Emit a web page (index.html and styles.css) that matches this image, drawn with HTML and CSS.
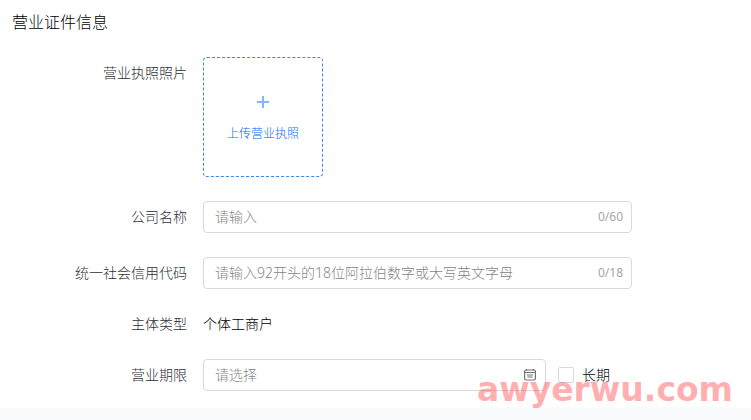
FILE: index.html
```html
<!DOCTYPE html>
<html lang="zh-CN">
<head>
    <meta charset="UTF-8">
    <meta name="viewport" content="width=device-width, initial-scale=1.0">
    <title>营业证件信息</title>
    <link rel="stylesheet" href="styles.css">
</head>
<body>
    <form class="panel">
        <h2 class="title">营业证件信息</h2>

        <div class="row">
            <span class="label" id="licenseLabel">营业执照照片</span>
            <button type="button" class="upload" aria-describedby="licenseLabel">
                <svg class="plus" viewBox="0 0 12 12" aria-hidden="true">
                    <path d="M0 6h12M6 0v12"/>
                </svg>
                <span>上传营业执照</span>
            </button>
        </div>

        <div class="row">
            <label class="label" for="company">公司名称</label>
            <div class="field">
                <input type="text" id="company" placeholder="请输入" maxlength="60">
                <span class="count">0/60</span>
            </div>
        </div>

        <div class="row">
            <label class="label" for="creditCode">统一社会信用代码</label>
            <div class="field">
                <input type="text" id="creditCode" placeholder="请输入92开头的18位阿拉伯数字或大写英文字母" maxlength="18">
                <span class="count">0/18</span>
            </div>
        </div>

        <div class="row row-text">
            <span class="label">主体类型</span>
            <span class="value">个体工商户</span>
        </div>

        <div class="row">
            <label class="label" for="term">营业期限</label>
            <div class="term">
                <div class="field">
                    <input type="text" id="term" placeholder="请选择">
                    <svg class="calendar" viewBox="0 0 12 12" aria-hidden="true">
                        <rect x="0.6" y="1" width="10.8" height="10" rx="1.5"/>
                        <path d="M1 3.5h10M2.5 0v1.5M9.5 0v1.5M3 6h6M3.5 8h5"/>
                    </svg>
                </div>
                <label class="check">
                    <input type="checkbox">
                    <span>长期</span>
                </label>
            </div>
        </div>
    </form>
    <div class="watermark">awyerwu.com</div>
</body>
</html>
```

FILE: styles.css
```css
* {
    box-sizing: border-box;
}
body {
    margin: 0;
    min-height: 100vh;
    position: relative;
    background-color: #fafbfd;
    font-family: "Noto Sans", "Noto Sans CJK SC", sans-serif;
    font-size: 14px;
    font-weight: 300;
    color: #000;
}
.panel {
    padding: 10px 12px 16px;
    background-color: #fff;
}
.title {
    margin: 0 0 23px;
    font-size: 16px;
    font-weight: 300;
    line-height: 24px;
}
.row {
    display: flex;
    gap: 16px;
    margin-bottom: 24px;
    line-height: 32px;
}
.row:last-child {
    margin-bottom: 0;
}
.row-text {
    line-height: 22px;
}
.label {
    flex: 0 0 175px;
    text-align: right;
    color: #2c2f36;
}
.upload {
    display: flex;
    flex-direction: column;
    align-items: center;
    justify-content: center;
    gap: 18px;
    width: 120px;
    height: 120px;
    padding: 4px 0 0;
    border: 1px dashed #3386f5;
    border-radius: 4px;
    background-color: #fff;
    color: #0a66f5;
    font: inherit;
    font-size: 12px;
    line-height: 16px;
    cursor: pointer;
}
.plus {
    width: 12px;
    height: 12px;
    fill: none;
    stroke: #85b6fc;
    stroke-width: 2;
}
.field {
    display: flex;
    align-items: center;
    flex: 1;
    max-width: 429px;
    height: 32px;
    padding: 0 8px 0 11px;
    border: 1px solid #d9d9db;
    border-radius: 4px;
    background-color: #fff;
}
.field input {
    flex: 1;
    min-width: 0;
    height: 100%;
    padding: 0 0 2px;
    border: 0;
    outline: 0;
    background: none;
    font: inherit;
    color: inherit;
}
.field input::placeholder {
    color: #85868a;
    opacity: 1;
}
.count {
    font-size: 12px;
    font-weight: normal;
    color: #a5a6a9;
}
.term {
    display: flex;
    flex: 1;
    gap: 12px;
}
.term .field {
    max-width: 343px;
    padding-right: 9px;
}
.calendar {
    width: 12px;
    height: 12px;
    fill: none;
    stroke: #707277;
    stroke-width: 1.2;
}
.check {
    display: flex;
    align-items: center;
    gap: 8px;
}
.check input {
    appearance: none;
    width: 16px;
    height: 16px;
    margin: 0;
    border: 1px solid #d9d9db;
    border-radius: 2px;
    background-color: #fff;
}
.watermark {
    position: absolute;
    right: 18px;
    bottom: 10px;
    font-family: "DejaVu Sans", sans-serif;
    font-size: 33px;
    font-weight: bold;
    line-height: 40px;
    color: rgba(255, 96, 96, 0.5);
    pointer-events: none;
}
```
